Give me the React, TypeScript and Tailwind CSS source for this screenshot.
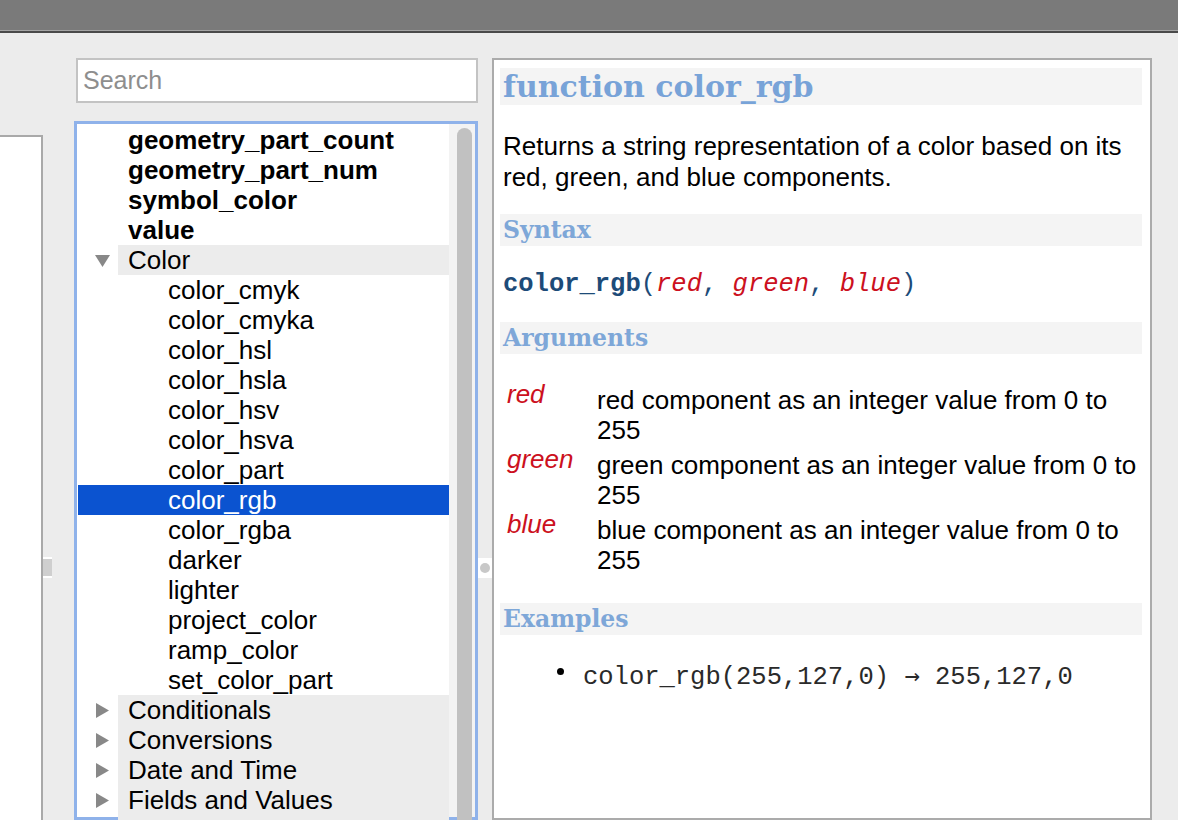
import React from 'react';

const sans = { fontFamily: '"Liberation Sans", Arial, sans-serif' };

type Row = { label: string; kind: 'bold' | 'group-open' | 'group' | 'child'; selected?: boolean };

const rows: Row[] = [
  { label: 'geometry_part_count', kind: 'bold' },
  { label: 'geometry_part_num', kind: 'bold' },
  { label: 'symbol_color', kind: 'bold' },
  { label: 'value', kind: 'bold' },
  { label: 'Color', kind: 'group-open' },
  { label: 'color_cmyk', kind: 'child' },
  { label: 'color_cmyka', kind: 'child' },
  { label: 'color_hsl', kind: 'child' },
  { label: 'color_hsla', kind: 'child' },
  { label: 'color_hsv', kind: 'child' },
  { label: 'color_hsva', kind: 'child' },
  { label: 'color_part', kind: 'child' },
  { label: 'color_rgb', kind: 'child', selected: true },
  { label: 'color_rgba', kind: 'child' },
  { label: 'darker', kind: 'child' },
  { label: 'lighter', kind: 'child' },
  { label: 'project_color', kind: 'child' },
  { label: 'ramp_color', kind: 'child' },
  { label: 'set_color_part', kind: 'child' },
  { label: 'Conditionals', kind: 'group' },
  { label: 'Conversions', kind: 'group' },
  { label: 'Date and Time', kind: 'group' },
  { label: 'Fields and Values', kind: 'group' },
  { label: 'Fuzzy Matching', kind: 'group' },
];

const args = [
  { name: 'red', desc: 'red component as an integer value from 0 to 255' },
  { name: 'green', desc: 'green component as an integer value from 0 to 255' },
  { name: 'blue', desc: 'blue component as an integer value from 0 to 255' },
];

const TreeRow: React.FC<{ row: Row }> = ({ row }) => {
  if (row.kind === 'bold') {
    return <div className="h-[30px] pl-[50px] font-bold text-black">{row.label}</div>;
  }
  if (row.kind === 'child') {
    return (
      <div className={`h-[30px] pl-[90px] ${row.selected ? 'bg-[#0b53d0] text-white' : 'text-black'}`}>
        {row.label}
      </div>
    );
  }
  return (
    <div className="flex h-[30px] items-center">
      <div className="flex w-[40px] justify-center pl-[8px]">
        {row.kind === 'group-open' ? (
          <svg width="15" height="13" viewBox="0 0 15 13"><path d="M0 1 H15 L7.5 13 Z" fill="#888888" /></svg>
        ) : (
          <svg width="13" height="15" viewBox="0 0 13 15"><path d="M0 0 V15 L13 7.5 Z" fill="#888888" /></svg>
        )}
      </div>
      <div className="h-[30px] flex-1 bg-[#ececec] pl-[10px] text-black">{row.label}</div>
    </div>
  );
};

const SubHead: React.FC<{ children: React.ReactNode; className?: string }> = ({ children, className }) => (
  <div
    className={`h-[32px] bg-[#f4f4f4] pl-[3px] text-[23.5px] leading-[32px] font-bold text-[#7ea7d8] ${className ?? ''}`}
    style={{ fontFamily: '"DejaVu Serif", Georgia, serif' }}
  >
    {children}
  </div>
);

const mono = { fontFamily: '"Liberation Mono", "Courier New", monospace' };

export default function App() {
  return (
    <div className="flex h-[820px] w-[1178px] flex-col overflow-hidden bg-[#ececec]" style={sans}>
      <div className="h-[30px] shrink-0 bg-[#7a7a7a]" />
      <div className="h-px shrink-0 bg-[#a4a4a4]" />
      <div className="h-[2px] shrink-0 bg-[#4a4a4a]" />

      <div className="flex min-h-0 flex-1">
        {/* left collapsed panel */}
        <div className="mt-[102px] w-[43px] border-t-2 border-r-2 border-[#a9a9a9] bg-white" />

        {/* splitter */}
        <div className="w-[31px]">
          <div className="mt-[524px] h-[21px] w-[9px] border-y-2 border-white bg-[#cfcfcf]" />
        </div>

        {/* function list column */}
        <div className="flex w-[404px] flex-col">
          <div className="mt-[25px] ml-[2px] flex h-[45px] shrink-0 items-center border-2 border-[#c3c3c3] bg-white pl-[5px] text-[25px] text-[#8e8e8e]">
            Search
          </div>
          <div className="mt-[18px] flex min-h-0 flex-1 border-[3px] border-[#8fb2ea] bg-white text-[26px] leading-[30px]">
            <div className="flex-1 pt-px pl-px">
              {rows.map((r) => (
                <TreeRow key={r.label} row={r} />
              ))}
            </div>
            <div className="w-[26px] bg-[#f3f3f3] pt-[4px] pl-[8px]">
              <div className="h-[760px] w-[15px] rounded-full bg-[#c1c1c1]" />
            </div>
          </div>
        </div>

        {/* splitter */}
        <div className="w-[14px]">
          <div className="mt-[525px] flex h-[20px] w-[14px] items-center justify-center bg-white">
            <div className="h-[10px] w-[10px] rounded-full bg-[#c8c8c8]" />
          </div>
        </div>

        {/* help panel */}
        <div className="mt-[25px] w-[660px] border-2 border-[#ababab] bg-white pt-[8px] pr-[8px] pl-[6px]">
          <div
            className="h-[37px] bg-[#f4f4f4] pl-[3px] text-[30px] leading-[37px] font-bold text-[#78a3d8]"
            style={{ fontFamily: '"DejaVu Serif", Georgia, serif' }}
          >
            function color_rgb
          </div>
          <p className="mt-[26px] pl-[3px] text-[26px] leading-[31px] text-black">
            Returns a string representation of a color based on its red, green, and blue components.
          </p>

          <SubHead className="mt-[21px]">Syntax</SubHead>
          <div className="mt-[24px] pl-[3px] text-[25.5px] leading-[30px] text-[#1d4b78]" style={mono}>
            <span className="font-bold">color_rgb</span>(
            <span className="text-[#cc1020] italic">red</span>,{' '}
            <span className="text-[#cc1020] italic">green</span>,{' '}
            <span className="text-[#cc1020] italic">blue</span>)
          </div>

          <SubHead className="mt-[22px]">Arguments</SubHead>
          <div className="mt-[31px] flex flex-col gap-[5px] pl-[7px] text-[26px] leading-[30px]">
            {args.map((a) => (
              <div key={a.name} className="grid grid-cols-[90px_1fr]">
                <div className="leading-[18px] text-[#cc1020] italic">{a.name}</div>
                <div className="text-black">{a.desc}</div>
              </div>
            ))}
          </div>

          <SubHead className="mt-[28px]">Examples</SubHead>
          <div className="mt-[25px] flex items-center pl-[57px] text-[25.5px] leading-[30px] text-[#2a2a2a]" style={mono}>
            <span className="mr-[19px] mb-[10px] h-[7px] w-[7px] rounded-full bg-black" />
            <span>
              color_rgb(255,127,0){' '}
              <span style={{ fontFamily: '"DejaVu Sans Mono", monospace' }}>→</span> 255,127,0
            </span>
          </div>
        </div>
      </div>
    </div>
  );
}
